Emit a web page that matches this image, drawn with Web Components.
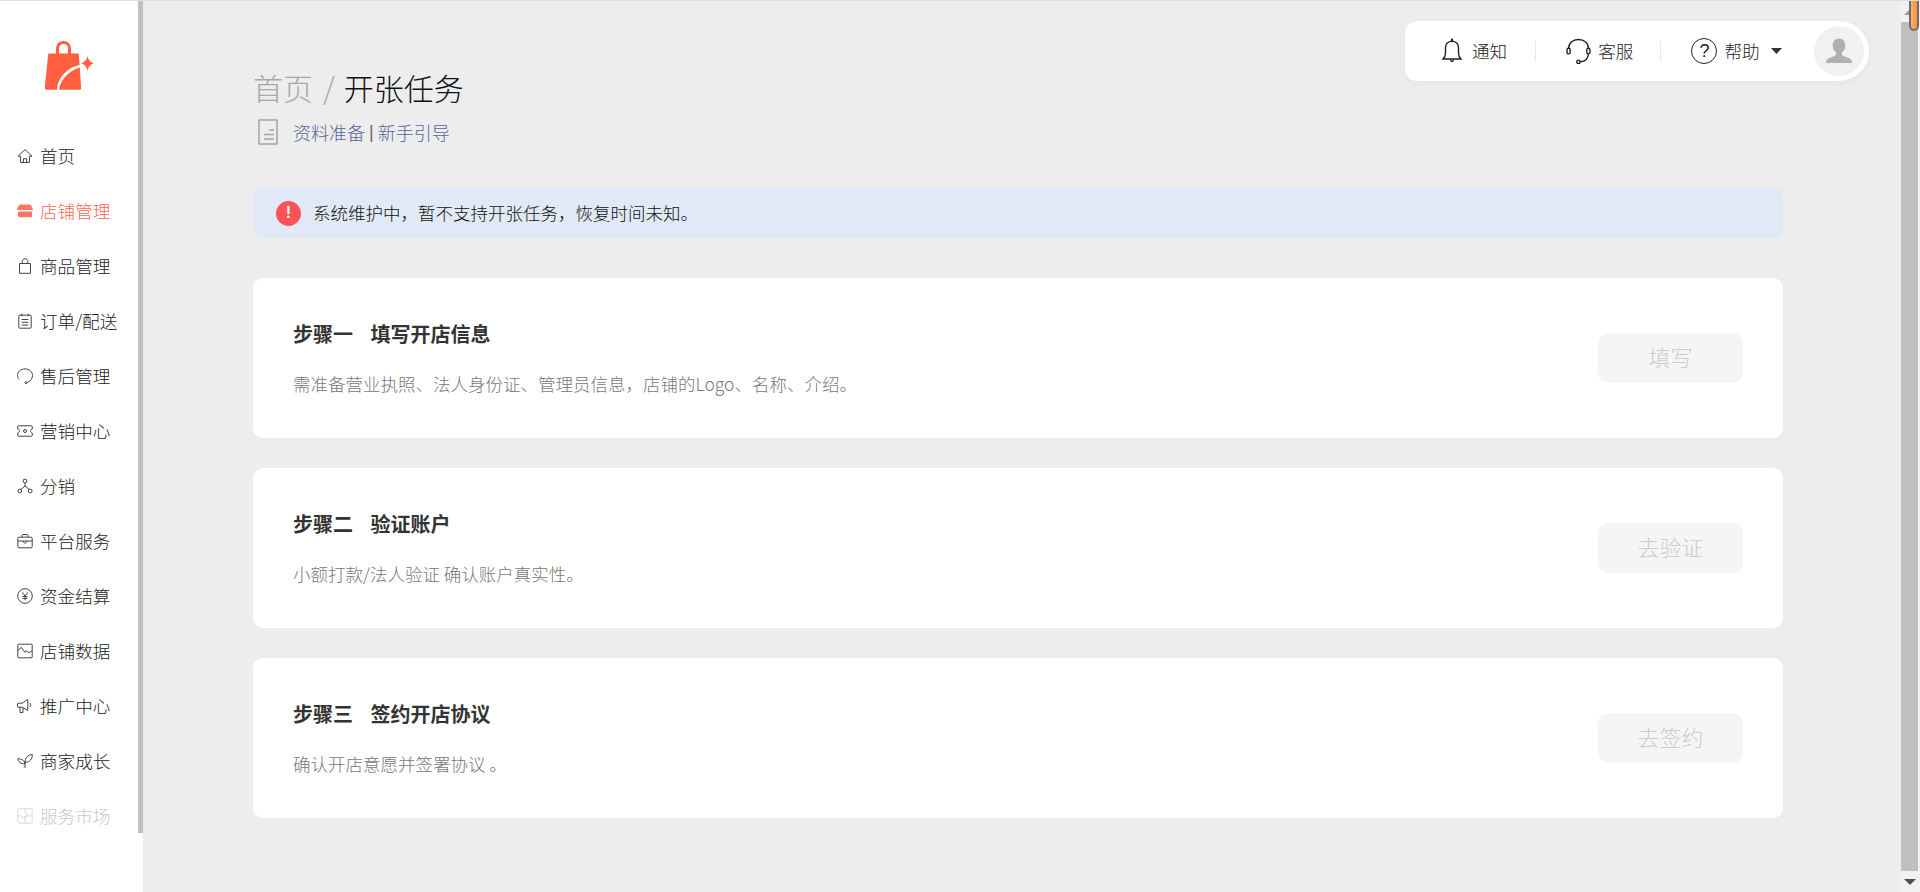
<!DOCTYPE html>
<html lang="zh-CN"><head><meta charset="utf-8"><title>开张任务</title>
<style>
html,body{margin:0;height:892px;overflow:hidden;background:#ededed}
body{font-family:"Noto Sans CJK SC","Liberation Sans",sans-serif;color:#333}
</style></head><body>
<app-shell>
  <side-nav slot="side">
    <nav-item icon="home">首页</nav-item>
    <nav-item icon="shop" active>店铺管理</nav-item>
    <nav-item icon="bag">商品管理</nav-item>
    <nav-item icon="order">订单/配送</nav-item>
    <nav-item icon="after">售后管理</nav-item>
    <nav-item icon="ticket">营销中心</nav-item>
    <nav-item icon="tree">分销</nav-item>
    <nav-item icon="case">平台服务</nav-item>
    <nav-item icon="yen">资金结算</nav-item>
    <nav-item icon="chart">店铺数据</nav-item>
    <nav-item icon="horn">推广中心</nav-item>
    <nav-item icon="sprout">商家成长</nav-item>
    <nav-item icon="market" disabled>服务市场</nav-item>
  </side-nav>
  <top-bar slot="top"></top-bar>
  <page-head current="开张任务" parent="首页"></page-head>
  <alert-bar>系统维护中，暂不支持开张任务，恢复时间未知。</alert-bar>
  <step-card step="步骤一" heading="填写开店信息" action="填写">需准备营业执照、法人身份证、管理员信息，店铺的Logo、名称、介绍。</step-card>
  <step-card step="步骤二" heading="验证账户" action="去验证">小额打款/法人验证 确认账户真实性。</step-card>
  <step-card step="步骤三" heading="签约开店协议" action="去签约">确认开店意愿并签署协议 。</step-card>
</app-shell>
<script>
const ICONS={
home:'<path d="M1 8.200 8 1.600l7 6.600h-2.600v6.300H3.600V8.200z"/><path d="M6.400 14.500v-3.800h3.200v3.800"/>',
shop:'<path fill="#ff7564" stroke="none" d="M3.200 1.500h9.600c.6 0 1 .3 1.300.8L16 6.400c.1.400 0 .6-.4.6H.4C0 7-.1 6.800 0 6.400l1.900-4.100c.3-.5.7-.8 1.300-.8zM1 8.500h14V13c0 .8-.5 1.200-1.200 1.200H2.200C1.500 14.200 1 13.800 1 13z"/>',
bag:'<path d="M2.500 5.500h11v9.800h-11z"/><path d="M5.200 5.500V3.300C5.200 1.800 6.400.8 8 .8s2.800 1 2.800 2.500v2.200"/>',
order:'<rect x="1.800" y="2.200" width="12.400" height="13" rx="1"/><path d="M4.800.6v2.600M11.200.6v2.600M4.700 6.500h6.600M4.700 9.300h6.600M4.700 12.100h6.600"/>',
after:'<path d="M2.300 11.500C.9 10.300.5 8.900.5 7.600.5 3.600 3.800.9 8 .9s7.500 2.700 7.500 6.700c0 3-2 5.800-5.200 6.900"/><circle cx="9" cy="14.700" r="1"/>',
ticket:'<path d="M1.500 2.800h13c.4 0 .8.400.8.800V6c-1.100.2-1.700 1-1.700 2s.6 1.800 1.700 2v2.400c0 .4-.4.800-.8.800h-13c-.4 0-.8-.4-.8-.8V10c1.100-.2 1.700-1 1.700-2S1.800 6.200.7 6V3.600c0-.4.4-.8.800-.8z"/><circle cx="8" cy="8" r="1.500"/>',
tree:'<circle cx="8" cy="3" r="1.900"/><circle cx="2.800" cy="13" r="1.900"/><circle cx="13.200" cy="13" r="1.900"/><path d="M8 4.900V8M8 8l-4.200 3.400M8 8l4.200 3.400"/>',
case:'<rect x=".8" y="4.200" width="14.400" height="10.600" rx="1.200"/><path d="M5 4.200V2.400c0-.5.400-.9.900-.9h4.200c.5 0 .9.400.9.900v1.800M.8 8h14.400M6 8c.3 1.300 1 2 2 2s1.700-.7 2-2"/>',
yen:'<circle cx="8" cy="8" r="7.300"/><path d="M5.300 4.300 8 8l2.700-3.700M8 8v4.200M5.500 8.500h5M5.500 10.400h5"/>',
chart:'<rect x=".8" y="1.200" width="14.400" height="13.600" rx=".8"/><path d="M.8 7.600 4.300 4.400l3.600 4.800 2-1.500 2.200 2.300 3.100-2.500"/>',
horn:'<path d="M1 5.200h4.300L10.800 1.300v11.200L5.300 9.200H1c-.3 0-.5-.2-.5-.5V5.700c0-.3.200-.5.500-.5z"/><path d="M3 9.200v5.300h3V9.900M13 5c.9 1.100.9 2.800 0 3.900"/>',
sprout:'<path d="M8 15V8.200M8 9.500C8 5.500 10.500 1.700 15.300 1.500c.2 4.500-2.500 7.700-7.300 8zM8 10.800C7.500 8 5.300 5.900.8 5.700c.3 3.200 3 5.300 7.200 5.100z"/>',
market:'<rect x=".8" y=".8" width="14.400" height="14.400" rx=".8"/><path d="M8 .8v4c1.500-.4 2.300.5 2.300 1.400S9.300 7.800 8 7.500M.8 8h4.400c-.4 1.500.4 2.400 1.300 2.400S8.300 9.500 8 8.200v7M8 8h3.500c.4-1.200 1.200-1.700 1.800-1.200.7.500.5 1.500-.3 2v-.8"/>'
};
function def(name,html,init){
  const t=document.createElement('template');t.innerHTML=html;
  customElements.define(name,class extends HTMLElement{
    connectedCallback(){
      if(this.shadowRoot)return;
      this.attachShadow({mode:'open'}).appendChild(t.content.cloneNode(true));
      if(init)init.call(this,this.shadowRoot);
    }
  });
}
def('app-shell',`<style>
:host{display:flex;height:892px;box-sizing:border-box;border-top:1px solid #dedede;overflow:hidden}
main{position:relative;flex:1;min-width:0;padding:0 118px 0 110px;box-sizing:border-box;display:flex;flex-direction:column}
.top{position:absolute;top:20px;right:32px}
.sb{width:19px;flex:none;background:#f1f1f1;display:flex;flex-direction:column;position:relative}
.up,.down{height:21px;flex:none;display:flex;align-items:center;justify-content:center;padding-right:2px}
.thumb{flex:none;height:849px;width:17px;background:#bfbfbf}
.down{margin-top:auto;height:21px}
.mark{position:absolute;left:8px;top:-8px;width:6px;height:34px;border:2px solid #6c6c6c;border-radius:0 0 5px 5px;background:linear-gradient(90deg,#ffb066,#ff8f3c)}
</style>
<slot name="side"></slot>
<main><div class="top"><slot name="top"></slot></div><slot></slot></main>
<div class="sb"><div class="up"><svg width="14" height="8" viewBox="0 0 14 8"><path d="M7 1l6 6H1z" fill="#9a9a9a"/></svg></div><div class="thumb"></div><div class="down"><svg width="14" height="8" viewBox="0 0 14 8"><path d="M1 1h12L7 7z" fill="#505050"/></svg></div><div class="mark"></div></div>`);
def('side-nav',`<style>
:host{display:flex;flex:none;width:143px;background:#fff;height:891px}
.col{width:138px;display:flex;flex-direction:column}
.logo{height:50px;padding:40px 0 37px 45px;flex:none}
.bar{width:5px;height:832px;background:#c1c1c1;flex:none}
svg{display:block}
</style>
<div class="col"><div class="logo"><svg width="50" height="50" viewBox="45 41 50 50">
<path fill="none" stroke="#ff5f3f" stroke-width="3" d="M57.500 54v-5.500c0-3.700 2.600-6 6-6s6 2.300 6 6V54"/>
<path fill="#ff5f3f" d="M49.500 53.500h28c.8 0 1.300.5 1.400 1.300l2.200 33c.1 1.300-.5 2-1.700 2H46.500c-1.200 0-1.800-.7-1.700-2l3.300-33c.1-.8.600-1.300 1.400-1.300z"/>
<path fill="#fff" d="M57 90c.5-12 10-23 25-25.500l.2 2C71 69.500 60.300 78.500 59 90z"/>
<path fill="#ff5f3f" d="M87.500 55.800c.7 4 2.300 6 6.500 7.500-4.200 1.500-5.800 3.500-6.500 8-.7-4.500-2.300-6.500-6.500-8 4.200-1.500 5.800-3.500 6.500-7.500z"/>
</svg></div><slot></slot></div><div class="bar"></div>`);
def('nav-item',`<style>
:host{display:flex;align-items:center;height:55px;padding-left:17px;gap:7px;font-size:17.600px;font-weight:300;color:#222;flex:none}
:host([active]){color:#ff6450}
:host([disabled]){color:#c8c8c8}
svg{width:16px;height:16px;flex:none;fill:none;stroke:#444;stroke-width:1;overflow:visible}
:host([disabled]) svg{stroke:#d8d8d8}
</style><svg viewBox="0 0 16 16"></svg><span><slot></slot></span>`,function(r){r.querySelector('svg').innerHTML=ICONS[this.getAttribute('icon')]||''});
def('top-bar',`<style>
:host{display:block;font-size:17.600px;font-weight:300;color:#222}
.bar{display:flex;align-items:center;height:60px;width:464px;box-sizing:border-box;background:#fff;border-radius:12px 30px 30px 12px;box-shadow:0 2px 8px rgba(0,0,0,.03);padding-left:37px;padding-right:5px}
.it{display:flex;align-items:center}
.it span{padding-bottom:2px}
svg{display:block;flex:none;fill:none;stroke:#222;stroke-width:1.400}
.sep{width:1px;height:20px;background:#e8e8e8;flex:none}
.avatar{width:50px;height:50px;border-radius:50%;background:#f1f1f1;display:flex;align-items:center;justify-content:center;margin-left:auto}
.q{width:26px;height:26px;box-sizing:border-box;border:1.500px solid #222;border-radius:50%;display:flex;align-items:center;justify-content:center;font:18px/1 "Liberation Sans",sans-serif;color:#222}
</style>
<div class="bar">
<div class="it"><svg width="20" height="26" viewBox="0 0 20 26"><path d="M1 21c1.700-1.500 2.400-3 2.500-5.500V10C3.600 6 6 3.400 10 3.400S16.400 6 16.500 10v5.500c.1 2.500.8 4 2.500 5.500z"/><path d="M9.300 3.200 9.700 1.300h.6l.4 1.900M8.500 21.500c.2 1.500.7 2 1.500 2s1.300-.5 1.500-2" stroke-linejoin="round"/></svg><span style="margin-left:10px">通知</span></div>
<div class="sep" style="margin-left:28px"></div>
<div class="it" style="margin-left:30px"><svg width="25" height="26" viewBox="0 0 25 26"><path d="M2.500 11C2.500 5 6.800 1.500 12.500 1.500S22.500 5 22.500 11"/><rect x="1" y="10.300" width="3.200" height="5.600" rx="1.600"/><rect x="20.800" y="10.300" width="3.200" height="5.600" rx="1.600"/><path d="M22.400 16c-.3 4.800-3.500 7.500-8 7.800"/><circle cx="12.500" cy="23.800" r="1.700"/></svg><span style="margin-left:7px">客服</span></div>
<div class="sep" style="margin-left:27px"></div>
<div class="it" style="margin-left:30px"><div class="q">?</div><span style="margin-left:7px">帮助</span><svg style="margin-left:11px;stroke:none;fill:#333" width="11" height="6" viewBox="0 0 11 6"><path d="M0 0h11L5.500 6z"/></svg></div>
<div class="avatar"><svg style="stroke:none;fill:#b0b0b0" width="28" height="28" viewBox="0 0 28 28"><path d="M14 1.500c4 0 6.300 2.800 6.300 6.800 0 3.300-1.500 6-3.300 7.300v1.800c0 .6 1 1.300 3.500 2.300 3.500 1.300 6 2.300 6.500 4.800.2 1-.3 1.500-1.200 1.500H2.200c-.9 0-1.400-.5-1.200-1.500.5-2.500 3-3.500 6.500-4.800C10 18.700 11 18 11 17.400v-1.800C9.200 14.300 7.700 11.600 7.700 8.300c0-4 2.300-6.800 6.300-6.800z"/></svg></div>
</div>`);
def('page-head',`<style>
:host{display:block;padding-top:66px}
.t{font-size:30px;font-weight:300;line-height:40px;color:#111;height:40px;white-space:nowrap}
.p{color:#a8a8a8}
.s{margin:0 9px 0 10px;color:#a8a8a8}
.sub{display:flex;align-items:center;margin-top:12px;height:26px;font-size:18px;font-weight:300;color:#53669b;padding-left:5px}
svg{display:block;flex:none;fill:none;stroke:#a4a4a4;stroke-width:1.500;margin-right:15px}
i{font-style:normal;color:#666;margin:0 4px;font-family:"Liberation Sans",sans-serif}
</style>
<div class="t"><span class="p"></span><span class="s">/</span><span class="c"></span></div>
<div class="sub"><svg width="20" height="26" viewBox="0 0 20 26"><path d="M1 1h18v24H1z" stroke-linejoin="round"/><path d="M11 11h5M6 15.500h10M6 20h10"/></svg><span>资料准备</span><i>|</i><span>新手引导</span></div>`,function(r){r.querySelector('.p').textContent=this.getAttribute('parent');r.querySelector('.c').textContent=this.getAttribute('current')});
def('alert-bar',`<style>
:host{display:flex;align-items:center;height:50px;margin-top:43px;background:#e0e9f5;border-radius:8px;padding-left:23px;gap:12px;font-size:17.500px;font-weight:300;color:#111;flex:none}
.d{width:25px;height:25px;border-radius:50%;background:#ff5257;color:#fff;display:flex;align-items:center;justify-content:center;font:bold 16px/1 "Liberation Sans",sans-serif;flex:none}
span{padding-bottom:2px}
</style><div class="d">!</div><span><slot></slot></span>`);
def('step-card',`<style>
:host{display:flex;align-items:center;justify-content:space-between;height:160px;box-sizing:border-box;margin-top:30px;background:#fff;border-radius:10px;padding:0 40px;flex:none}
:host(:first-of-type){margin-top:40px}
.txt{padding-top:2px}
h3{margin:0;font-size:20px;line-height:26px;font-weight:700;color:#333;white-space:pre}
h3 i{font-style:normal;font-size:17.500px;font-weight:400}
p{margin:23px 0 0;font-size:17.500px;font-weight:300;line-height:26px;color:#777}
button{all:unset;box-sizing:border-box;display:flex;align-items:center;justify-content:center;width:145px;height:50px;padding-bottom:4px;border-radius:10px;background:#f5f5f5;color:#ccc;font-size:22px;font-weight:300;font-family:inherit}
</style><div class="txt"><h3><span class="a"></span><i>　</i><span class="b"></span></h3><p><slot></slot></p></div><button></button>`,function(r){r.querySelector('.a').textContent=this.getAttribute('step');r.querySelector('.b').textContent=this.getAttribute('heading');r.querySelector('button').textContent=this.getAttribute('action')});
</script>
</body></html>
